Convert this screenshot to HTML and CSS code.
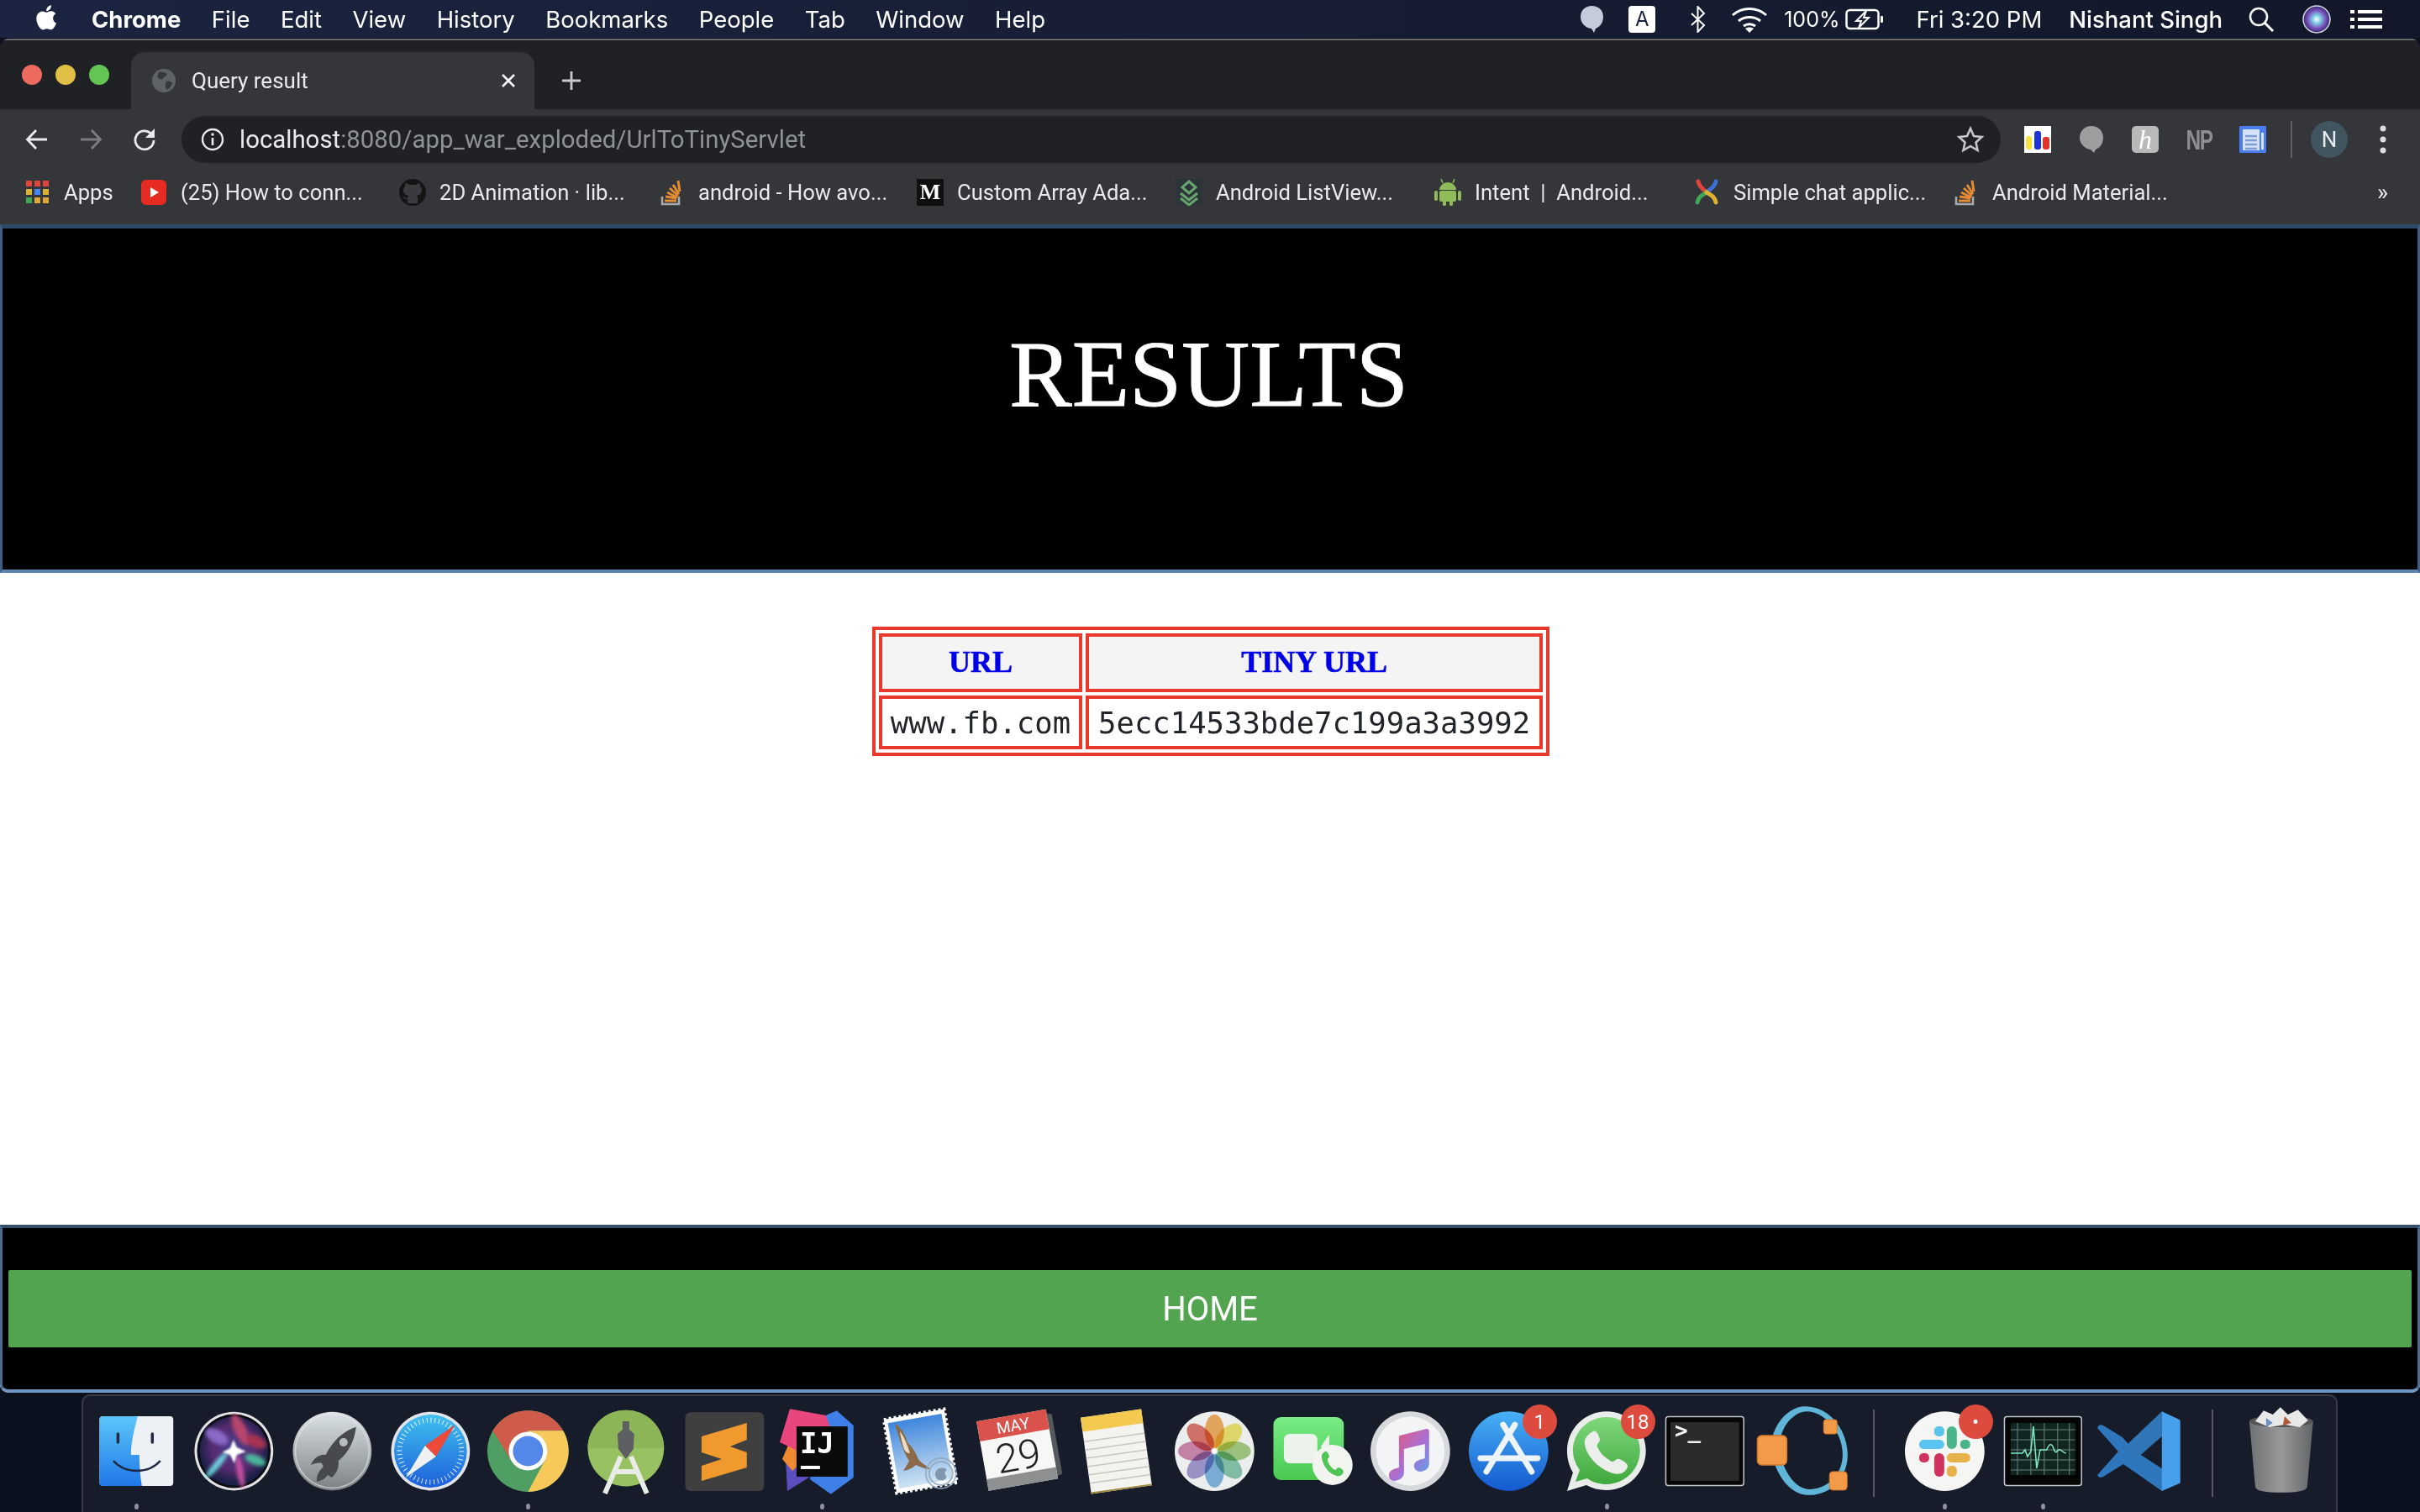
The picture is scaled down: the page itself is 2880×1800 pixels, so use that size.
FILE: index.html
```html
<!DOCTYPE html>
<html lang="en">
<head>
<meta charset="utf-8">
<title>Query result</title>
<link rel="stylesheet" href="styles.css">
</head>
<body>
<header class="menubar">
  <svg class="apple" viewBox="0 0 24 24"><path fill="#fff" d="M17.05 12.54c-.03-2.6 2.12-3.85 2.22-3.91-1.21-1.77-3.09-2.01-3.76-2.04-1.6-.16-3.12.94-3.93.94-.81 0-2.06-.92-3.39-.89-1.74.03-3.35 1.01-4.25 2.57-1.81 3.14-.46 7.8 1.3 10.35.86 1.25 1.89 2.65 3.24 2.6 1.3-.05 1.79-.84 3.36-.84 1.57 0 2.01.84 3.38.81 1.4-.02 2.28-1.27 3.14-2.53.99-1.45 1.4-2.86 1.42-2.93-.03-.01-2.72-1.04-2.73-4.13zM14.46 4.9c.72-.87 1.2-2.08 1.07-3.28-1.03.04-2.28.69-3.02 1.56-.66.77-1.24 2-1.09 3.18 1.15.09 2.32-.58 3.04-1.46z"/></svg>
  <nav class="menu">
    <span class="menu-app">Chrome</span><span>File</span><span>Edit</span><span>View</span><span>History</span><span>Bookmarks</span><span>People</span><span>Tab</span><span>Window</span><span>Help</span>
  </nav>
  <div class="status">
    <svg class="st-bubble" viewBox="0 0 29 34"><path fill="#c6cbdc" d="M14.5 1C22 1 28 6 28 14c0 7-4 12-9 14l-2 5-3-5C6 27 1 21 1 14 1 6 7 1 14.5 1z"/></svg>
    <span class="st-a">A</span>
    <svg class="st-bt" viewBox="0 0 20 32"><path fill="none" stroke="#fff" stroke-width="2" d="M2 9l15 14-7.500 8V1l7.500 8L2 23"/></svg>
    <svg class="st-wifi" viewBox="0 0 44 32"><g fill="none" stroke="#fff" stroke-width="3"><path d="M2 11c11-10 29-10 40 0"/><path d="M9 18c7-6 19-6 26 0"/><path d="M15 24c4-3 10-3 14 0"/></g><path fill="#fff" d="M22 32l-5-5c3-2 7-2 10 0z"/></svg>
    <span class="st-pct">100%</span>
    <svg class="st-batt" viewBox="0 0 46 26"><rect x="1.500" y="2" width="38" height="22" rx="4" fill="none" stroke="#fff" stroke-width="2.500"/><rect x="42" y="9" width="3" height="8" rx="1" fill="#fff"/><path fill="#161d33" stroke="#fff" stroke-width="2" d="M25 3L13 15h6l-3 8 12-12h-6z"/></svg>
    <span class="st-time">Fri 3:20 PM</span>
    <span class="st-user">Nishant Singh</span>
    <svg class="st-search" viewBox="0 0 32 32"><circle cx="13" cy="13" r="10" fill="none" stroke="#fff" stroke-width="2.500"/><path d="M20 20l10 10" stroke="#fff" stroke-width="3"/></svg>
    <svg class="st-siri" viewBox="0 0 34 34"><defs><radialGradient id="sg0"><stop offset="0" stop-color="#fff"/><stop offset=".3" stop-color="#7fd0e8"/><stop offset=".7" stop-color="#7a4bb8"/><stop offset="1" stop-color="#2b2f6b"/></radialGradient></defs><circle cx="17" cy="17" r="16" fill="url(#sg0)" stroke="#d8d8e0" stroke-width="1.500"/></svg>
    <svg class="st-list" viewBox="0 0 38 22"><g fill="#fff"><rect y="0" width="5" height="4"/><rect x="9" y="0" width="29" height="4"/><rect y="9" width="5" height="4"/><rect x="9" y="9" width="29" height="4"/><rect y="18" width="5" height="4"/><rect x="9" y="18" width="29" height="4"/></g></svg>
  </div>
</header>

<div class="window">
  <div class="tabstrip">
    <div class="lights"><i class="red"></i><i class="yellow"></i><i class="green"></i></div>
    <div class="tab">
      <svg class="fav-globe" viewBox="0 0 28 28"><circle cx="14" cy="14" r="14" fill="#5f6266"/><path fill="#37383b" d="M8 4c4-1 8 0 10 2-1 3-4 3-5 6-2 1-6 0-7-3zM17 15c3-1 6 0 7 2-1 4-4 7-7 8-1-3-2-7 0-10z"/></svg>
      <span class="tab-title">Query result</span>
      <svg class="tab-x" viewBox="0 0 18 18"><path d="M2 2l14 14M16 2L2 16" stroke="#fff" stroke-width="2.500"/></svg>
    </div>
    <svg class="new-tab" viewBox="0 0 24 24"><path d="M12 1v22M1 12h22" stroke="#c8cacc" stroke-width="2.800"/></svg>
  </div>

  <div class="toolbar">
    <svg class="nav" viewBox="0 0 28 28"><path d="M26 14H3M13 3L2.500 14 13 25" fill="none" stroke="#e8eaed" stroke-width="2.800"/></svg>
    <svg class="nav" viewBox="0 0 28 28"><path d="M2 14h23M15 3l10.500 11L15 25" fill="none" stroke="#7a7c80" stroke-width="2.800"/></svg>
    <svg class="nav" viewBox="0 0 28 28"><path d="M25 15a11 11 0 1 1-3.500-8.200" fill="none" stroke="#e8eaed" stroke-width="2.800"/><path fill="#e8eaed" d="M26 1v11H15z"/></svg>
    <div class="omnibox">
      <svg class="info" viewBox="0 0 28 28"><circle cx="14" cy="14" r="12" fill="none" stroke="#e8eaed" stroke-width="2.400"/><path d="M14 12v9" stroke="#e8eaed" stroke-width="2.600"/><circle cx="14" cy="8" r="1.700" fill="#e8eaed"/></svg>
      <span class="url"><span class="host">localhost</span>:8080/app_war_exploded/UrlToTinyServlet</span>
      <svg class="star" viewBox="0 0 32 32"><path d="M16 3l4 9 9.500 1-7 6.500 2 9.500-8.500-5-8.500 5 2-9.500-7-6.500 9.500-1z" fill="none" stroke="#c4c6c9" stroke-width="2.600"/></svg>
    </div>
    <div class="extensions">
      <svg class="ext" viewBox="0 0 32 32"><rect width="32" height="32" fill="#fff"/><rect x="2" y="12" width="7" height="16" rx="3" fill="#f4e33c"/><rect x="12" y="6" width="8" height="22" rx="3" fill="#1d34d8"/><rect x="22" y="13" width="8" height="15" rx="3" fill="#e53228"/></svg>
      <svg class="ext" viewBox="0 0 32 32"><path fill="#9d9ea0" d="M16 0c8 0 14 6 14 14 0 7-4 12-9 14l-2 4-4-4C8 27 2 21 2 14 2 6 8 0 16 0z"/></svg>
      <span class="ext ext-h">h</span>
      <span class="ext ext-np">NP</span>
      <svg class="ext" viewBox="0 0 32 32"><rect width="32" height="32" rx="1" fill="#4a7df0"/><path fill="#d5e2f8" d="M4 4h20v25H4z"/><path stroke="#7f9fd0" stroke-width="2.500" d="M7 12h14M7 17h14M7 22h14M7 27h14"/><path fill="#d5e2f8" d="M26 8h3v20h-3z"/></svg>
      <i class="tb-sep"></i>
      <span class="avatar">N</span>
      <svg class="more" viewBox="0 0 8 34"><circle cx="4" cy="4" r="3.500" fill="#dcdde0"/><circle cx="4" cy="17" r="3.500" fill="#dcdde0"/><circle cx="4" cy="30" r="3.500" fill="#dcdde0"/></svg>
    </div>
  </div>

  <div class="bookmarks">
    <a class="bm bm-apps">
      <svg class="fav" viewBox="0 0 27 27"><g fill="#e0443a"><rect width="7" height="7"/><rect x="10" width="7" height="7"/><rect x="20" width="7" height="7"/></g><rect y="10" width="7" height="7" fill="#d8b235"/><rect x="10" y="10" width="7" height="7" fill="#4285f4"/><rect x="20" y="10" width="7" height="7" fill="#d8b235"/><rect y="20" width="7" height="7" fill="#3fa757"/><rect x="10" y="20" width="7" height="7" fill="#e0a63a"/><rect x="20" y="20" width="7" height="7" fill="#e0a63a"/></svg>
      <span>Apps</span>
    </a>
    <a class="bm">
      <svg class="fav" viewBox="0 0 32 32"><rect x="1" y="1" width="30" height="30" rx="6" fill="#e62b22"/><path fill="#fff" d="M12 10l10 6-10 6z"/></svg>
      <span>(25) How to conn...</span>
    </a>
    <a class="bm">
      <svg class="fav" viewBox="0 0 32 32"><circle cx="16" cy="16" r="16" fill="#141414"/><path fill="#3a3b3e" d="M10 29v-5c-4 1-5-2-6-3 2 0 3 2 6 2 0-2 1-3 1-3-4-1-6-3-6-7 0-2 1-3 2-4 0-2 0-3 1-4 2 0 3 1 4 2h8c1-1 2-2 4-2 1 1 1 2 1 4 1 1 2 2 2 4 0 4-2 6-6 7 1 1 1 2 1 3v6z"/></svg>
      <span>2D Animation · lib...</span>
    </a>
    <a class="bm">
      <svg class="fav" viewBox="0 0 32 32"><path fill="none" stroke="#a9aaad" stroke-width="2.600" d="M5 21v9h20v-9"/><path stroke="#e38b33" stroke-width="3" d="M8 26h14M9 21l13 2M11 16l12 6M14 11l10 9M18 7l7 11M24 2l2 13"/></svg>
      <span>android - How avo...</span>
    </a>
    <a class="bm">
      <svg class="fav" viewBox="0 0 32 32"><rect width="32" height="32" fill="#0f0f0f"/></svg>
      <b class="bm-m">M</b>
      <span>Custom Array Ada...</span>
    </a>
    <a class="bm">
      <svg class="fav" viewBox="0 0 32 32"><rect width="32" height="32" fill="#2c343a"/><path fill="none" stroke="#66a56c" stroke-width="3" d="M8 10l8-7 8 7-8 7zM6 17l10 8 10-8M6 23l10 8 10-8"/></svg>
      <span>Android ListView...</span>
    </a>
    <a class="bm">
      <svg class="fav" viewBox="0 0 32 32"><g fill="#8fbb58"><path d="M6 13a10 9 0 0 1 20 0z"/><rect x="6" y="14" width="20" height="13" rx="2"/><rect y="14" width="4" height="12" rx="2"/><rect x="28" y="14" width="4" height="12" rx="2"/><rect x="10" y="26" width="4" height="6" rx="1.500"/><rect x="18" y="26" width="4" height="6" rx="1.500"/></g><path stroke="#8fbb58" stroke-width="1.500" d="M10 5L8 0M22 5l2-5"/></svg>
      <span>Intent &nbsp;|&nbsp; Android...</span>
    </a>
    <a class="bm">
      <svg class="fav" viewBox="0 0 32 32"><g fill="none" stroke-width="5" stroke-linecap="round"><path stroke="#e0443a" d="M6 3c2 8 6 9 10 13"/><path stroke="#3d6fd4" d="M27 3c-2 8-7 9-11 13"/><path stroke="#3fa757" d="M5 28c1-7 6-9 11-12"/><path stroke="#e0b030" d="M16 16c5 3 10 5 11 12"/></g></svg>
      <span>Simple chat applic...</span>
    </a>
    <a class="bm">
      <svg class="fav" viewBox="0 0 32 32"><path fill="none" stroke="#a9aaad" stroke-width="2.600" d="M5 21v9h20v-9"/><path stroke="#e38b33" stroke-width="3" d="M8 26h14M9 21l13 2M11 16l12 6M14 11l10 9M18 7l7 11M24 2l2 13"/></svg>
      <span>Android Material...</span>
    </a>
    <span class="bm-more">»</span>
  </div>

  <div class="page">
    <section class="results-head"><h1>RESULTS</h1></section>
    <main class="results-body">
      <table class="results">
        <tr><th>URL</th><th>TINY URL</th></tr>
        <tr><td>www.fb.com</td><td>5ecc14533bde7c199a3a3992</td></tr>
      </table>
    </main>
    <footer class="results-foot"><a class="home">HOME</a></footer>
  </div>
</div>

<div class="dock">
  <div class="slot run"><svg class="dk" viewBox="0 0 117 116"><defs><linearGradient id="fb" x1="0" y1="0" x2="0" y2="1"><stop offset="0" stop-color="#5cc6fa"/><stop offset="1" stop-color="#1f78e8"/></linearGradient></defs><rect x="14.500" y="14" width="88" height="83" rx="4" fill="#edf1f6"/><path fill="url(#fb)" d="M14.500 18a4 4 0 0 1 4-4H60C56 30 52 45 52 60h10c0 12 1 25 3 37H18.500a4 4 0 0 1-4-4z"/><path d="M36.500 35v10M77.500 35v10" stroke="#222c44" stroke-width="3.500" stroke-linecap="round"/><path d="M31 67c14 16 42 16 56 0" fill="none" stroke="#1d2a44" stroke-width="2.500"/></svg></div>

  <div class="slot"><svg class="dk" viewBox="0 0 117 116"><defs><radialGradient id="sr" cx=".5" cy=".45"><stop offset="0" stop-color="#4a3f8c"/><stop offset=".65" stop-color="#552a6e"/><stop offset="1" stop-color="#1c2048"/></radialGradient><filter id="blur3"><feGaussianBlur stdDeviation="2"/></filter><filter id="blur1"><feGaussianBlur stdDeviation="1.200"/></filter></defs><circle cx="58.500" cy="55.500" r="47" fill="#e3e3e6"/><circle cx="58.500" cy="55.500" r="44" fill="#0b0b14"/><circle cx="58.500" cy="55.500" r="41" fill="url(#sr)"/><g opacity=".9" filter="url(#blur3)"><ellipse cx="66" cy="30" rx="7" ry="20" fill="#c2486e" transform="rotate(-25 66 30)"/><ellipse cx="85" cy="44" rx="13" ry="7" fill="#b0364f" transform="rotate(25 85 44)"/><ellipse cx="38" cy="38" rx="15" ry="8" fill="#8f6fd0" transform="rotate(30 38 38)"/><ellipse cx="84" cy="66" rx="13" ry="6" fill="#4bc4a0" transform="rotate(20 84 66)"/><ellipse cx="38" cy="72" rx="4" ry="20" fill="#6fe0e8" transform="rotate(40 38 72)"/><ellipse cx="66" cy="80" rx="4" ry="20" fill="#d454a8" transform="rotate(-10 66 80)"/></g><path filter="url(#blur1)" fill="#fff" d="M58 42l4 9 11 5-11 4-3 10-5-10-9-3 9-5z"/></svg></div>

  <div class="slot"><svg class="dk" viewBox="0 0 117 116"><defs><linearGradient id="rk" x1="0" y1="0" x2="0" y2="1"><stop offset="0" stop-color="#dbe3e6"/><stop offset="1" stop-color="#7e8183"/></linearGradient></defs><circle cx="58.500" cy="55.500" r="47" fill="url(#rk)"/><circle cx="58.500" cy="55.500" r="44" fill="none" stroke="#e6e9eb" stroke-width="1.500" opacity=".6"/><path fill="#47494d" d="M87 27c-15 4-29 18-36 33-7-1-14 3-18 12 4-2 9-3 13-2l2 4c-6 6-8 10-8 18 5-1 10-3 13-8l5 3c6-5 9-12 8-20 12-9 19-24 21-40z"/><circle cx="72" cy="45" r="5" fill="#b8bcbf"/></svg></div>

  <div class="slot"><svg class="dk" viewBox="0 0 117 116"><defs><linearGradient id="sf" x1="0" y1="0" x2="0" y2="1"><stop offset="0" stop-color="#3fc0ee"/><stop offset="1" stop-color="#1d5fdb"/></linearGradient></defs><circle cx="58.500" cy="55.500" r="47" fill="#e2e5ea"/><circle cx="58.500" cy="55.500" r="43.500" fill="url(#sf)"/><circle cx="58.500" cy="55.500" r="37" fill="none" stroke="#fff" stroke-width="6" stroke-dasharray="1 3.840" opacity=".85"/><path fill="#ee4a3a" d="M88 24L65 62 52 49z"/><path fill="#eef0f2" d="M29 87l23-38 13 13z"/></svg></div>

  <div class="slot run"><svg class="dk" viewBox="0 0 117 116"><circle cx="58.500" cy="55.500" r="48.500" fill="#4f9e63"/><path fill="#cf5b4b" d="M16.500 31.250a48.500 48.500 0 0 1 84 0H58.500L38 66z"/><path fill="#f6c95a" d="M100.500 31.250A48.500 48.500 0 0 1 58.500 104L79 66 58.500 31.250z"/><circle cx="58.500" cy="55.500" r="23" fill="#fff"/><circle cx="58.500" cy="55.500" r="18" fill="#5487ea"/></svg></div>

  <div class="slot"><svg class="dk" viewBox="0 0 117 116"><circle cx="58" cy="52" r="45.500" fill="#98c261"/><path d="M12.500 52a45.500 45.500 0 0 1 91 0z" fill="#8bb556"/><path fill="#5d5f62" d="M54 20h8v10l6 5-1 18-9 12-9-12-1-18 6-5z"/><path fill="none" stroke="#e8ebe6" stroke-width="6" d="M52 62L33 106M64 62l19 44M42 80h32"/></svg></div>

  <div class="slot"><svg class="dk" viewBox="0 0 117 116"><rect x="11.500" y="9" width="94" height="94" rx="6" fill="#3f3f3f"/><path fill="#f09a2e" d="M31 38l54-16v20l-20 8 20 7v18L31 91V73l24-8-24-8z"/></svg></div>

  <div class="slot run"><svg class="dk" viewBox="0 0 117 116"><path fill="#3f7fe8" d="M63 13l13-6 20 18v62l-27 20-25-18z"/><path fill="#5b4fc0" d="M17 103l-2-40 30-20 20 30z"/><path fill="#ef8a33" d="M11 65l12-28 20 24-20 18z"/><path fill="#e8467c" d="M20 5l43 8 12 34-46 8-21-10z"/><rect x="28" y="26" width="61" height="60" fill="#0a0a0a"/><text class="ij" x="32" y="58">IJ</text><rect x="33" y="73" width="23" height="4" fill="#fff"/></svg></div>

  <div class="slot"><svg class="dk" viewBox="0 0 117 116"><defs><linearGradient id="ml" x1="0" y1="0" x2="0" y2="1"><stop offset="0" stop-color="#3f86dc"/><stop offset="1" stop-color="#cfe3f3"/></linearGradient></defs><g transform="rotate(-10 58.500 55.500)"><rect x="22" y="11" width="73" height="89" fill="#fff" stroke="#fff" stroke-width="4" stroke-dasharray="3 3"/><rect x="26" y="16" width="65" height="79" fill="url(#ml)"/></g><path fill="#8a6a48" d="M28 23c7 3 13 14 15 22 5 5 10 12 12 18 2 6 12 10 15 14-6 0-12-3-17-5-3 3-8 6-15 7 3-5 6-9 7-12-7-10-12-28-17-44z"/><path fill="#e8dcc8" d="M34 32c5 6 9 16 12 26-3 0-6-2-7-5-2-6-4-14-5-21z"/><g fill="none" stroke="#8fa6bd" stroke-width="2" opacity=".8"><circle cx="83" cy="82" r="14"/><circle cx="83" cy="82" r="18"/></g><path fill="#7f96ad" d="M83 76c3-1 6 0 7 2-3 2-3 6 0 8-2 4-5 5-7 4-3 1-6-2-7-6 0-5 4-9 7-8z"/></svg></div>

  <div class="slot"><svg class="dk" viewBox="0 0 117 116"><g transform="rotate(-10 58.500 55.500)"><rect x="21" y="18" width="84" height="74" rx="2" fill="#54595e"/><rect x="15" y="12" width="84" height="84" fill="#f7f7f5"/><rect x="15" y="82" width="84" height="14" fill="#8e8f90"/><rect x="15" y="12" width="84" height="24" fill="#d9534c"/><text class="cal-m" x="57" y="31">MAY</text><text class="cal-d" x="57" y="78">29</text></g></svg></div>

  <div class="slot"><svg class="dk" viewBox="0 0 117 116"><g transform="rotate(-8 58.500 55.500)"><rect x="22" y="10" width="73" height="92" fill="#f4f3ef"/><rect x="22" y="10" width="73" height="17" fill="#f3c94f"/><path d="M22 39h73M22 49h73M22 59h73M22 69h73M22 79h73M22 89h73" stroke="#c8c6c0" stroke-width="1.500"/><rect x="22" y="100" width="73" height="2" fill="#a08a40"/></g></svg></div>

  <div class="slot"><svg class="dk" viewBox="0 0 117 116"><circle cx="58.500" cy="55.500" r="47.500" fill="#eceded"/><g class="petals"><ellipse cx="58.500" cy="32" rx="11.500" ry="20" fill="#f39b3c"/><ellipse cx="58.500" cy="32" rx="11.500" ry="20" fill="#ecdf50" transform="rotate(45 58.500 55.500)"/><ellipse cx="58.500" cy="32" rx="11.500" ry="20" fill="#93c56b" transform="rotate(90 58.500 55.500)"/><ellipse cx="58.500" cy="32" rx="11.500" ry="20" fill="#6dbb9c" transform="rotate(135 58.500 55.500)"/><ellipse cx="58.500" cy="32" rx="11.500" ry="20" fill="#66a8dc" transform="rotate(180 58.500 55.500)"/><ellipse cx="58.500" cy="32" rx="11.500" ry="20" fill="#8f84c8" transform="rotate(225 58.500 55.500)"/><ellipse cx="58.500" cy="32" rx="11.500" ry="20" fill="#c76fa0" transform="rotate(270 58.500 55.500)"/><ellipse cx="58.500" cy="32" rx="11.500" ry="20" fill="#d9594e" transform="rotate(315 58.500 55.500)"/></g><circle cx="58.500" cy="55.500" r="2.500" fill="#fff"/></svg></div>

  <div class="slot"><svg class="dk" viewBox="0 0 117 116"><defs><linearGradient id="ft" x1="0" y1="0" x2="0" y2="1"><stop offset="0" stop-color="#79ec86"/><stop offset="1" stop-color="#48c951"/></linearGradient></defs><rect x="11.500" y="15" width="84" height="75" rx="9" fill="url(#ft)"/><rect x="24" y="35" width="40" height="35" rx="7" fill="#eef2ec"/><path fill="#eef2ec" d="M68 50l10-14v30z"/><circle cx="82" cy="72" r="24" fill="#f2f4f0"/><path fill="#4fc457" d="M73 56c2-1 5 3 5 6 0 2-2 2-2 4 1 5 5 10 9 12 2 0 2-3 4-3 3 0 7 4 6 6-2 4-5 5-8 4-9-2-17-12-18-23 0-3 2-5 4-6z"/></svg></div>

  <div class="slot"><svg class="dk" viewBox="0 0 117 116"><defs><linearGradient id="mu" x1="0" y1="0" x2="1" y2="1"><stop offset="0" stop-color="#f0566a"/><stop offset=".55" stop-color="#a86fd4"/><stop offset="1" stop-color="#55a8ef"/></linearGradient></defs><circle cx="58.500" cy="55.500" r="47.500" fill="#d7d9dc"/><circle cx="58.500" cy="55.500" r="41" fill="#f3f4f5"/><path fill="url(#mu)" d="M46 37l32-8c2 0 3 1 3 3v38c0 6-4 9-10 10-5 0-8-3-8-7s4-7 10-8l3-1V47l-25 6v28c0 6-5 9-11 10-5 0-7-3-7-7s4-7 9-8l3-1V40c0-2 0-3 1-3z"/></svg></div>

  <div class="slot"><svg class="dk" viewBox="0 0 117 116"><defs><linearGradient id="as" x1="0" y1="0" x2="0" y2="1"><stop offset="0" stop-color="#47b1f6"/><stop offset="1" stop-color="#1559cf"/></linearGradient></defs><circle cx="58.500" cy="55.500" r="47.500" fill="url(#as)"/><g stroke="#eef4fb" stroke-width="7" stroke-linecap="round"><path d="M52 24l34 56M66 24L32 80"/><path d="M25 64h68" stroke-width="7"/></g></svg><span class="badge">1</span></div>

  <div class="slot run"><svg class="dk" viewBox="0 0 117 116"><defs><linearGradient id="wa" x1="0" y1="0" x2="0" y2="1"><stop offset="0" stop-color="#7fd77d"/><stop offset="1" stop-color="#3fa93d"/></linearGradient></defs><path fill="#e9ece8" d="M58 8c26 0 47 21 47 47s-21 47-47 47c-9 0-17-2-24-6l-23 7 7-22c-5-8-7-17-7-26C11 29 32 8 58 8z"/><path fill="url(#wa)" d="M58 15c22 0 40 18 40 40S80 95 58 95c-8 0-16-2-23-7l-14 4 5-14c-5-7-8-15-8-23 0-22 18-40 40-40z"/><path fill="#eceeec" d="M42 32c4-3 7 6 8 9 1 4-4 5-3 9 3 8 10 14 17 18 4 1 5-4 9-3 3 1 12 5 10 10-3 7-10 9-17 7C50 78 34 62 32 47c-1-6 4-12 10-15z"/></svg><span class="badge">18</span></div>

  <div class="slot"><svg class="dk" viewBox="0 0 117 116"><rect x="11.500" y="14.500" width="93" height="82" rx="3" fill="#060606" stroke="#c6c8cc" stroke-width="1.500"/><rect x="17" y="21" width="82" height="70" fill="#2a2a2a"/><text class="term" x="22" y="40">&gt;_</text></svg></div>

  <div class="slot"><svg class="dk" viewBox="0 0 117 116"><path fill="#5fb6d8" d="M63 2c26 1 47 25 49 54s-18 52-46 52c-22 0-38-22-44-48C16 32 38 1 63 2zm0 6C43 9 26 36 32 60c5 22 19 42 36 41 22-1 40-20 38-45C105 32 84 8 63 8z"/><rect x="4.500" y="37" width="35" height="35" rx="5" fill="#f29a48" stroke="#d3782c" stroke-width="1.500"/><rect x="83.500" y="18" width="16" height="17" rx="3" fill="#f29a48" stroke="#d3782c"/><rect x="90.500" y="80" width="21" height="22" rx="4" fill="#f29a48" stroke="#d3782c"/></svg></div>

  <i class="dock-sep"></i>

  <div class="slot run"><svg class="dk" viewBox="0 0 117 116"><circle cx="58.500" cy="55.500" r="47.500" fill="#f5f5f4"/><g fill="#5bc3ef"><rect x="28" y="42" width="30" height="11" rx="5.500"/><rect x="46" y="26" width="12" height="12" rx="5"/></g><g fill="#4bb58a"><rect x="61" y="26" width="12" height="27" rx="6"/><rect x="77" y="42" width="12" height="11" rx="5"/></g><g fill="#d1335f"><rect x="46" y="58" width="12" height="28" rx="6"/><rect x="28" y="58" width="12" height="11" rx="5"/></g><g fill="#e6b34a"><rect x="61" y="58" width="28" height="11" rx="5.500"/><rect x="61" y="73" width="12" height="13" rx="5"/></g></svg><span class="badge badge-dot">•</span></div>

  <div class="slot run"><svg class="dk" viewBox="0 0 117 116"><rect x="12.500" y="14.500" width="92" height="82" rx="3" fill="#050505" stroke="#c6c8cc" stroke-width="1.500"/><rect x="20" y="22" width="77" height="62" fill="#102420"/><g stroke="#7f9c94" stroke-width="1" opacity=".8"><path d="M20 30h77M20 42h77M20 54h77M20 66h77M20 78h77M28 22v62M44 22v62M60 22v62M76 22v62M90 22v62"/></g><path d="M20 58h14l3-4 3 8 4-6 3-30 4 50 4-22h8c3-8 6-8 8-2s3 6 6 2c3-2 5 4 9 4" fill="none" stroke="#7fe6c2" stroke-width="1.600"/></svg></div>

  <div class="slot"><svg class="dk" viewBox="0 0 117 116"><path fill="#2f77bc" d="M37 39L14 25c-3-2-6 0-6 1l-1 2 25 28L7 84c1 2 3 4 7 2l24-15 46 32 6-4V80L51 55z"/><path fill="#3075b6" d="M84 8L38 52l14 14 32-28z"/><path fill="#48a0ec" d="M84 8l21 10c1 1 1 2 1 4v69c0 2 0 3-1 3L84 103z"/></svg></div>

  <i class="dock-sep dock-sep-2"></i>

  <div class="slot"><svg class="dk" viewBox="0 0 117 116"><defs><linearGradient id="tr" x1="0" y1="0" x2="1" y2="0"><stop offset="0" stop-color="#6e7072"/><stop offset=".5" stop-color="#97999a"/><stop offset="1" stop-color="#626466"/></linearGradient></defs><path fill="url(#tr)" d="M20 20h76l-7 78c-1 5-12 7-31 7s-30-2-31-7z"/><ellipse cx="58" cy="20" rx="38" ry="7" fill="#555"/><path fill="#e8e8e8" d="M27 20l10-13 11 5 9-9 9 9 12-6 12 13-10 8-18-3-18 3z"/><path fill="#6a8fc0" d="M40 16l8 6-8 5z"/><path fill="#b05a3a" d="M62 14l8 8-10 3z"/></svg></div>
</div>
</body>
</html>
```
FILE: styles.css
```css
* { box-sizing: border-box; }
html, body { margin: 0; padding: 0; }
body {
  width: 2880px;
  height: 1800px;
  overflow: hidden;
  display: flex;
  flex-direction: column;
  background: #0a101e;
  font-family: Inter, "Liberation Sans", sans-serif;
}
svg { display: block; flex: none; }

/* macOS menu bar */
.menubar {
  height: 45px;
  flex: none;
  display: flex;
  align-items: center;
  padding-left: 39px;
  color: #fff;
  font-size: 27.5px;
  background: linear-gradient(90deg, #1b2440, #161d33 60%, #121829);
}
.apple { width: 34px; height: 38px; margin-top: -4px; margin-right: 36px; }
.menu { display: flex; gap: 36.5px; }
.menu-app { font-weight: 700; }
.status { margin-left: auto; display: flex; align-items: center; padding-right: 45px; }
.st-bubble { width: 29px; height: 34px; }
.st-a { width: 32px; height: 32px; margin-left: 29px; border-radius: 4px; background: #fff; color: #1a2238; font-size: 24px; display: flex; align-items: center; justify-content: center; }
.st-bt { width: 20px; height: 32px; margin-left: 41px; }
.st-wifi { width: 44px; height: 32px; margin-left: 29px; }
.st-pct { font-size: 25px; margin-left: 19px; }
.st-batt { width: 46px; height: 26px; margin-left: 7px; }
.st-time { margin-left: 38px; }
.st-user { margin-left: 32px; font-weight: 500; }
.st-search { width: 32px; height: 32px; margin-left: 30px; }
.st-siri { width: 34px; height: 34px; margin-left: 33px; }
.st-list { width: 38px; height: 22px; margin-left: 23px; }

/* browser window */
.window {
  height: 1612px;
  margin-top: 1px;
  flex: none;
  display: flex;
  flex-direction: column;
  border-radius: 10px;
  overflow: hidden;
}
.tabstrip {
  height: 84px;
  flex: none;
  display: flex;
  align-items: flex-end;
  background: #202124;
  border-top: 2px solid #6a6b6d;
}
.lights { display: flex; gap: 16px; align-self: flex-start; padding: 29px 0 0 26px; width: 156px; }
.lights i { width: 24px; height: 24px; border-radius: 50%; }
.lights .red { background: #ee6a5f; }
.lights .yellow { background: #e0bf47; }
.lights .green { background: #62c554; }
.tab {
  width: 480px;
  height: 68px;
  display: flex;
  align-items: center;
  padding: 0 22px 0 25px;
  background: #35363a;
  border-radius: 16px 16px 0 0;
  color: #e8eaed;
  font: 26px Roboto, sans-serif;
}
.fav-globe { width: 28px; height: 28px; }
.tab-title { margin-left: 19px; }
.tab-x { width: 18px; height: 18px; margin-left: auto; }
.new-tab { width: 24px; height: 24px; margin: 0 0 22px 32px; }

.toolbar {
  height: 64px;
  flex: none;
  display: flex;
  align-items: flex-start;
  background: #35363a;
  padding: 8px 0 0 30px;
}
.nav { width: 28px; height: 28px; margin: 14px 36px 0 0; }
.omnibox {
  width: 2165px;
  height: 56px;
  margin-left: -6px;
  flex: none;
  display: flex;
  align-items: center;
  padding: 0 20px 0 23px;
  border-radius: 28px;
  background: #202124;
  font: 29.4px Roboto, sans-serif;
  color: #8f9296;
}
.info { width: 28px; height: 28px; }
.url { margin-left: 18px; }
.host { color: #e8eaed; }
.star { width: 32px; height: 32px; margin-left: auto; }
.extensions { display: flex; align-items: center; height: 56px; margin-left: 28px; }
.ext { width: 32px; height: 32px; margin-right: 32px; flex: none; }
.ext-h { background: #b9b9ba; border-radius: 5px; color: #fff; font: italic 32px "Liberation Serif", serif; display: flex; align-items: center; justify-content: center; }
.ext-np { color: #8c8e91; font: 700 34px "Liberation Sans", sans-serif; display: flex; align-items: center; justify-content: center; letter-spacing: -2px; transform: scaleX(.72); }
.tb-sep { width: 2px; height: 44px; background: #5f6063; margin: 0 22px 0 -3px; }
.avatar { width: 44px; height: 44px; border-radius: 50%; background: #40555f; color: #e8eaed; font: 26px Roboto, sans-serif; display: flex; align-items: center; justify-content: center; }
.more { width: 8px; height: 34px; margin-left: 38px; }

.bookmarks {
  height: 73px;
  flex: none;
  display: flex;
  align-items: center;
  padding: 0 38px 4px 31px;
  background: #35363a;
  color: #e8eaed;
  font: 25.6px Roboto, sans-serif;
}
.bm { position: relative; display: flex; align-items: center; gap: 16px; width: 308px; flex: none; white-space: nowrap; }
.bm-apps { width: 136px; gap: 18px; }
.fav { width: 32px; height: 32px; }
.bm-apps .fav { width: 27px; height: 27px; }
.bm-m { position: absolute; left: 0; width: 32px; text-align: center; color: #fff; font: 700 26px "Liberation Serif", serif; }
.bm-more { margin-left: auto; font-size: 28px; }

/* page */
.page { flex: 1; display: flex; flex-direction: column; background: #fff; min-height: 0; }
.results-head {
  height: 415px;
  flex: none;
  background: #000;
  border-style: solid;
  border-width: 5px 3px 4px;
  border-color: #2d4a69 #3d5f84 #5b84ae;
  display: flex;
  justify-content: center;
  text-align: center;
}
.results-head h1 {
  margin: 117px 3px 0 0;
  font: 400 112px/1 "Liberation Serif", "Times New Roman", serif;
  color: #fff;
  -webkit-text-stroke: .9px #fff;
}
.results-body { flex: 1; display: flex; justify-content: center; align-items: flex-start; padding: 64px 0 0 2px; }
.results { border: 4px solid #e8392c; border-spacing: 4px; border-collapse: separate; }
.results th, .results td { border: 4px solid #e8392c; padding: 0 11px; text-align: center; }
.results td:first-child { padding: 0 10px; }
.results th {
  height: 70px;
  padding-bottom: 2px;
  background: #f4f4f4;
  color: #0000e6;
  font: 700 36px "Liberation Serif", "Times New Roman", serif;
  -webkit-text-stroke: .5px #0000e6;
}
.results td {
  height: 64px;
  color: #212529;
  font: 35.6px "DejaVu Sans Mono", "Liberation Mono", monospace;
}
.results-foot {
  height: 200px;
  flex: none;
  padding: 50px 7px 0;
  background: #000;
  border-style: solid;
  border-width: 4px 3px 4px;
  border-color: #34506b #4a6a8f #6f97c5;
  border-radius: 0 0 10px 10px;
}
.home {
  display: flex;
  align-items: center;
  justify-content: center;
  height: 92px;
  border-radius: 2px;
  background: #52a450;
  color: #fff;
  font: 40px Roboto, sans-serif;
}

/* dock */
.dock {
  width: 2685px;
  height: 140px;
  flex: none;
  margin: 2px 0 0 97px;
  display: flex;
  padding: 10px 0 0 4.500px;
  background: #161c29;
  border: solid #3a3d45;
  border-width: 2px 2px 0;
  border-radius: 10px 10px 0 0;
}
.slot { position: relative; width: 116.700px; flex: none; height: 128px; }
.dk { width: 100%; height: 116px; }
.run::after {
  content: "";
  position: absolute;
  left: 56px;
  top: 118px;
  width: 5px;
  height: 7px;
  border-radius: 50%;
  background: #8e939e;
}
.badge {
  position: absolute;
  right: 1px;
  top: 0;
  width: 41px;
  height: 41px;
  border-radius: 50%;
  background: #dd4b3e;
  color: #fff;
  font: 24px Roboto, sans-serif;
  display: flex;
  align-items: center;
  justify-content: center;
}
.dock-sep { width: 2px; height: 104px; margin: 6px 25px 0; background: #565a63; flex: none; }
.dock-sep-2 { margin-left: 26px; margin-right: 23px; }

.ij { font: 700 34px "DejaVu Sans Mono", monospace; fill: #fff; }
.cal-m { font: 19px Roboto, sans-serif; fill: #fff; text-anchor: middle; }
.cal-d { font: 300 48px Roboto, sans-serif; fill: #222; text-anchor: middle; }
.term { font: 700 26px "DejaVu Sans Mono", monospace; fill: #f2f2f2; }
.petals ellipse { opacity: .8; mix-blend-mode: multiply; }
```
